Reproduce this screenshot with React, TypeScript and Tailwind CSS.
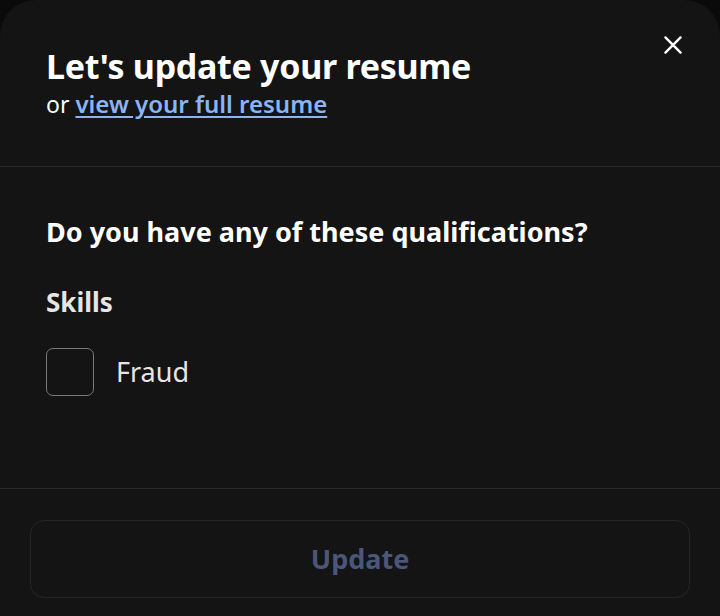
import { useState } from "react";

export default function App() {
  const [checked, setChecked] = useState(false);

  return (
    <div className="h-[616px] w-[720px] overflow-hidden bg-[#0a0a0a] font-['Noto_Sans',sans-serif]">
      <div className="flex h-full flex-col rounded-t-[36px] bg-[#141414]">
        {/* Header */}
        <div className="relative px-[46px] pt-[44px] pb-[46px]">
          <h1 className="text-[34px] leading-[44px] font-bold tracking-[-0.3px] text-white">
            Let's update your resume
          </h1>
          <p className="text-[23px] leading-[32px] text-white">
            or{" "}
            <a href="#" className="text-[24px] font-semibold text-[#8ab4f8] underline underline-offset-[3px]">
              view your full resume
            </a>
          </p>
          <button className="absolute top-[32px] right-[34px] text-white" aria-label="Close">
            <svg width="26" height="26" viewBox="0 0 24 24" fill="none" stroke="currentColor" strokeWidth="2.2" strokeLinecap="round">
              <path d="M5 5l14 14M19 5L5 19" />
            </svg>
          </button>
        </div>

        <div className="h-px bg-[#2a2a2a]" />

        {/* Question */}
        <div className="px-[46px] pt-[47px] pb-[92px]">
          <h2 className="text-[27px] leading-[36px] font-bold text-white">
            Do you have any of these qualifications?
          </h2>
          <h3 className="mt-[35px] text-[26px] leading-[34px] font-bold text-[#e6e6e6]">Skills</h3>
          <label className="mt-[29px] flex cursor-pointer items-center gap-[22px]">
            <input
              type="checkbox"
              checked={checked}
              onChange={(e) => setChecked(e.target.checked)}
              className="h-[48px] w-[48px] cursor-pointer appearance-none rounded-[7px] border border-[#7a7a7a] bg-transparent"
            />
            <span className="text-[27px] leading-[36px] text-[#e6e6e6]">Fraud</span>
          </label>
        </div>

        <div className="h-px bg-[#2a2a2a]" />

        {/* Footer */}
        <div className="px-[30px] pt-[31px]">
          <button
            disabled
            className="flex h-[78px] w-full items-center justify-center rounded-[14px] border border-[#262626] text-[27px] font-bold text-[#4b5679]"
          >
            Update
          </button>
        </div>
      </div>
    </div>
  );
}
